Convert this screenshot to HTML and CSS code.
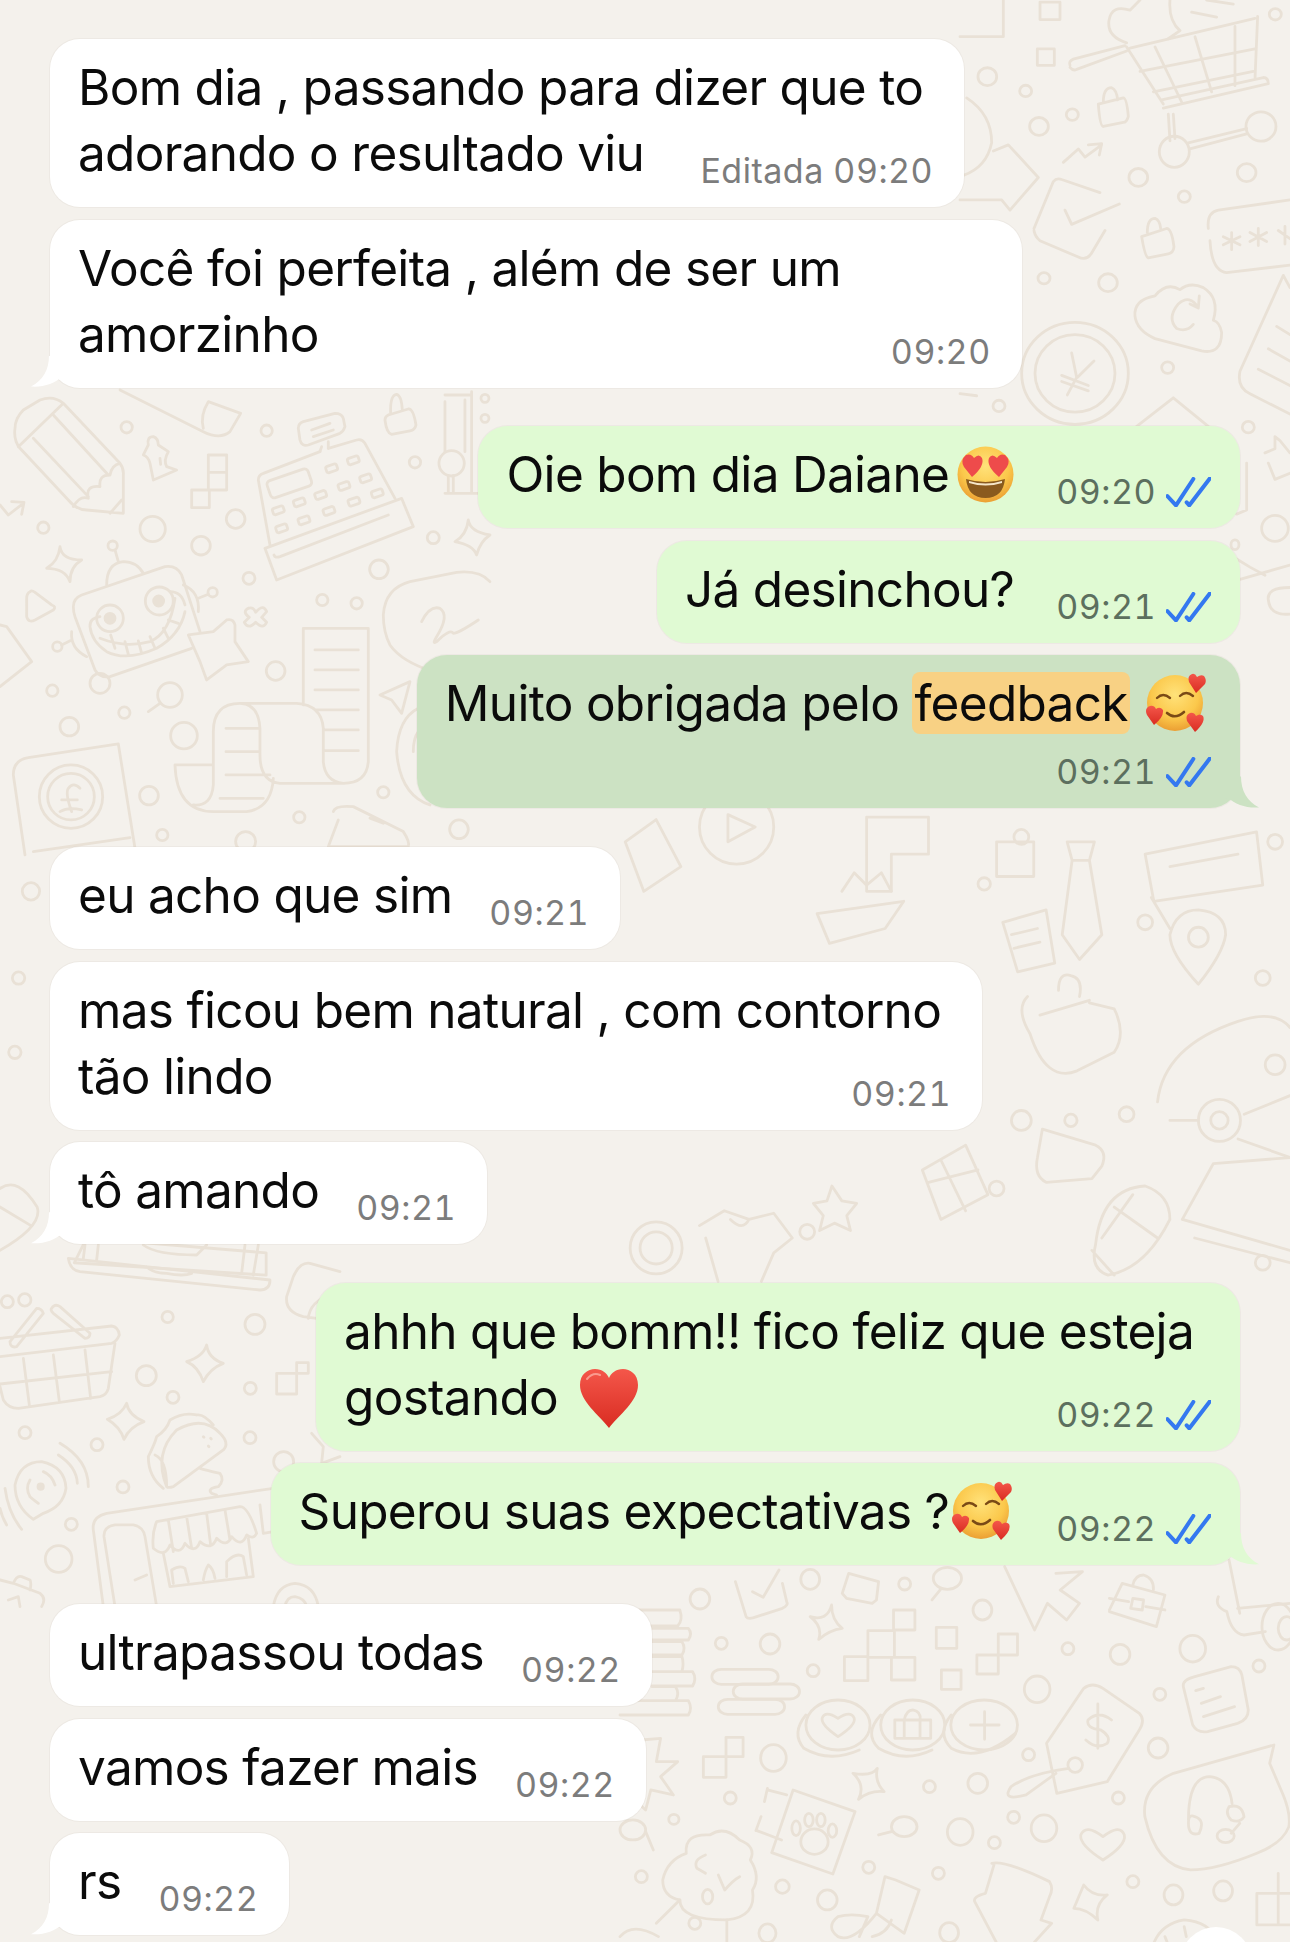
FILE: index.html
```html
<!DOCTYPE html>
<html lang="pt-BR">
<head>
    <meta charset="UTF-8">
    <meta name="viewport" content="width=device-width, initial-scale=1.0">
    <title>Conversa</title>
    <link rel="stylesheet" href="styles.css">
</head>
<body>
    <svg class="sprites" width="0" height="0">
        <defs>
            <radialGradient id="skin" cx="50%" cy="35%" r="70%">
                <stop offset="0" stop-color="#FFE27A"/>
                <stop offset=".6" stop-color="#FBC84B"/>
                <stop offset="1" stop-color="#E8962E"/>
            </radialGradient>
            <linearGradient id="red" x1="0" y1="0" x2="0" y2="1">
                <stop offset="0" stop-color="#F4574A"/>
                <stop offset="1" stop-color="#D92C22"/>
            </linearGradient>
            <symbol id="ticks" viewBox="0 0 135 90">
                <path d="M4 57 L30 85 L82 6 M62 76 L70 85 L132 4" fill="none" stroke="#3478F0" stroke-width="12" stroke-linecap="round" stroke-linejoin="round"/>
            </symbol>
            <symbol id="heart-eyes" viewBox="0 0 57 57">
                <circle cx="28.5" cy="28.5" r="28" fill="url(#skin)"/>
                <path d="M9 33 Q28.5 39 48 33 Q46 52 28.5 52 Q11 52 9 33Z" fill="#8A5A1E"/>
                <path d="M12 35 Q28.5 40 45 35 L45 37 Q28.5 42 12 37Z" fill="#F5E6C8"/>
                <path d="M15 31 L7 21 Q3 14 9 9 Q14 7 17 12 Q22 7 25 12 Q28 20 15 31Z" fill="#EE4B4B"/>
                <path d="M42 31 L50 21 Q54 14 48 9 Q43 7 40 12 Q35 7 32 12 Q29 20 42 31Z" fill="#EE4B4B"/>
            </symbol>
            <symbol id="hearts-face" viewBox="0 0 63 59">
                <circle cx="30" cy="30" r="28" fill="url(#skin)"/>
                <path d="M12 25 Q18 19 25 25 M35 23 Q41 17 48 23" fill="none" stroke="#7A4A16" stroke-width="2.4" stroke-linecap="round"/>
                <path d="M22 40 Q30 47 39 39" fill="none" stroke="#7A4A16" stroke-width="2.6" stroke-linecap="round"/>
                <path d="M51 20 L44 9 Q42 3 47 1 Q50 0 52 4 Q56 1 59 3 Q62 7 60 11Z" fill="url(#red)"/>
                <path d="M9 52 L2 42 Q-1 35 5 33 Q9 32 11 36 Q15 33 18 37 Q19 44 9 52Z" fill="url(#red)"/>
                <path d="M50 59 L42 48 Q40 42 45 40 Q49 39 51 43 Q55 40 58 43 Q61 49 50 59Z" fill="url(#red)"/>
            </symbol>
            <symbol id="red-heart" viewBox="0 0 60 59">
                <path d="M30 59 C20 46 1 32 1 16 C1 5 9 0 16 0 C23 0 28 4 30 9 C32 4 37 0 44 0 C51 0 59 5 59 16 C59 32 40 46 30 59Z" fill="url(#red)"/>
                <path d="M8 10 Q14 3 21 6" fill="none" stroke="#FA9A8E" stroke-width="2" stroke-linecap="round"/>
            </symbol>
        </defs>
    </svg>

    <!-- papel de parede, traçado na escala das capturas -->
    <svg class="doodles" width="1290" height="1942" viewBox="0 0 1290 1942">
        <g transform="translate(960 0) scale(.3333 .408)">
            <path d="M330 160 Q325 150 340 145 L495 112 M330 165 Q340 175 350 170 L500 125 M510 118 L885 45 M893 40 L885 195 M610 265 L925 205 Q925 190 910 190 L605 245 M500 115 L610 255 M540 175 L885 120 M580 225 L880 175 M585 115 L665 250 M705 90 L755 225 M825 65 L825 210 M625 280 L630 345 M640 280 L645 340 M685 350 L860 315 M690 365 L860 328"/>
            <path d="M500 105 Q440 90 447 50 Q455 10 510 25 L540 0 M630 0 Q625 50 660 75 L625 95 M695 30 L770 42 M740 0 L820 10"/>
            <path d="M232 120 H283 V160 H232Z M240 5 H300 V48 H240Z M0 90 H130 V0"/>
            <path d="M415 255 L490 240 Q500 240 505 285 Q500 300 490 300 L430 310 Q420 310 415 255 M430 250 Q430 215 455 215 Q470 220 473 245"/>
            <path d="M545 580 L620 560 Q635 560 642 605 Q640 620 625 622 L565 632 Q555 630 545 580 M562 570 Q562 535 585 535 Q600 540 602 560"/>
            <path d="M310 398 L355 365 L375 385 L425 355 M385 355 L425 352 L418 380"/>
            <path d="M100 370 L145 355 L235 435 L150 515 L125 490 L0 490 M20 240 Q95 280 95 350 Q80 410 10 430"/>
            <path d="M222 560 L280 445 Q290 435 305 440 L420 472 M222 565 Q225 580 240 590 L355 630 Q380 640 395 620 L435 565 M315 515 L335 550 L478 500"/>
            <path d="M745 560 Q740 520 775 515 L990 490 M750 590 Q755 665 800 668 L990 650 M815 570 V612 M790 580 L840 600 M790 600 L840 580 M895 560 V602 M870 570 L920 592 M870 592 L920 570 M975 555 V598 M955 565 L990 585"/>
            <path d="M585 830 L725 860 Q785 870 785 815 Q780 790 760 785 Q780 730 730 705 Q690 690 660 710 Q620 690 585 725 Q520 735 525 775 Q530 810 585 830 M715 755 Q690 720 655 745 Q620 780 650 805 Q680 815 700 795 M690 745 L715 755 L718 725"/>
            <ellipse cx="345" cy="915" rx="160" ry="125"/>
            <ellipse cx="345" cy="915" rx="120" ry="95"/>
            <path d="M335 865 L350 925 L322 968 M305 920 L385 945 M305 935 L385 958 M402 885 L352 925"/>
            <path d="M970 675 L840 910 Q830 950 870 965 L990 1015 M970 675 L990 705 M950 800 L990 820 M925 855 L990 885 M895 905 L990 945"/>
            <path d="M915 1110 L945 1100 L945 1070 L960 1080 L990 1110 M925 1135 L945 1175 L990 1160 M860 1135 V1250 L830 1260"/>
            <path d="M0 965 L50 970 M530 1045 L640 975 L745 1045"/>
            <path d="M840 1420 L990 1385 M830 1370 L870 1390 L915 1410 M990 1440 Q920 1440 925 1470 Q930 1510 990 1505"/>
            <circle cx="825" cy="1335" r="12"/>
            <ellipse cx="82" cy="188" rx="28" ry="22"/><ellipse cx="197" cy="223" rx="18" ry="14"/>
            <ellipse cx="237" cy="310" rx="28" ry="22"/><ellipse cx="337" cy="281" rx="18" ry="14"/>
            <ellipse cx="535" cy="435" rx="28" ry="22"/><ellipse cx="673" cy="482" rx="18" ry="14"/>
            <ellipse cx="860" cy="423" rx="28" ry="22"/><ellipse cx="946" cy="35" rx="18" ry="14"/>
            <ellipse cx="252" cy="682" rx="18" ry="14"/><ellipse cx="444" cy="693" rx="28" ry="22"/>
            <ellipse cx="623" cy="901" rx="18" ry="14"/><ellipse cx="117" cy="995" rx="18" ry="14"/>
            <ellipse cx="865" cy="1047" rx="18" ry="14"/><ellipse cx="945" cy="1295" rx="40" ry="32"/>
            <ellipse cx="643" cy="372" rx="45" ry="38"/><ellipse cx="903" cy="310" rx="45" ry="36"/>
        </g>

        <g transform="translate(0 385) scale(.3333)">
            <path d="M45 130 Q45 100 70 75 L120 45 Q160 30 190 55 L360 235 Q372 250 370 270 L370 385 L260 375 Q230 375 205 345 L60 190 Q40 165 45 130 M55 185 L190 55 M100 160 L265 335 M160 90 L325 270 M220 365 Q240 330 265 340 Q255 300 300 305 Q295 270 330 270 Q335 240 360 235 M330 385 L365 345"/>
            <path d="M360 15 L610 140 Q660 165 690 140 L722 85 L625 50 Q600 90 610 130"/>
            <path d="M445 180 Q440 155 460 155 Q475 160 475 180 L505 200 Q490 225 500 245 L530 255 L460 285 L450 235 Q445 215 430 210Z M480 220 L482 238"/>
            <path d="M625 210 H680 V315 H625Z M625 262 H680 M575 315 H628 V368 H575Z"/>
            <path d="M795 490 L1205 340 L1240 425 L830 585Z M810 480 L775 285 Q775 270 790 265 L960 200 M985 190 L1070 165 Q1085 160 1095 175 L1185 340 M822 510 Q825 520 840 515 L1165 390"/>
            <path d="M895 130 Q895 115 910 110 L1005 85 Q1025 85 1030 100 L1035 125 Q1030 140 1020 145 L925 180 Q905 185 900 165Z M935 135 L990 115 M940 155 L1000 135 M965 185 L960 200 M985 170 L985 190"/>
            <rect x="-65" y="-27" width="130" height="54" rx="12" transform="translate(868 295) rotate(-19)"/>
            <rect x="-17" y="-10" width="34" height="20" rx="6" transform="translate(995 250) rotate(-19)"/>
            <rect x="-17" y="-10" width="34" height="20" rx="6" transform="translate(1060 226) rotate(-19)"/>
            <rect x="-17" y="-10" width="34" height="20" rx="6" transform="translate(1097 280) rotate(-19)"/>
            <rect x="-17" y="-10" width="34" height="20" rx="6" transform="translate(1032 303) rotate(-19)"/>
            <rect x="-17" y="-10" width="34" height="20" rx="6" transform="translate(962 330) rotate(-19)"/>
            <rect x="-17" y="-10" width="34" height="20" rx="6" transform="translate(898 352) rotate(-19)"/>
            <rect x="-17" y="-10" width="34" height="20" rx="6" transform="translate(835 376) rotate(-19)"/>
            <rect x="-17" y="-10" width="34" height="20" rx="6" transform="translate(1132 325) rotate(-19)"/>
            <rect x="-17" y="-10" width="34" height="20" rx="6" transform="translate(1062 350) rotate(-19)"/>
            <rect x="-17" y="-10" width="34" height="20" rx="6" transform="translate(987 378) rotate(-19)"/>
            <rect x="-17" y="-10" width="34" height="20" rx="6" transform="translate(912 406) rotate(-19)"/>
            <rect x="-17" y="-10" width="34" height="20" rx="6" transform="translate(845 430) rotate(-19)"/>
            <path d="M1165 90 L1225 72 Q1240 70 1248 120 Q1245 135 1230 138 L1175 148 Q1160 145 1155 105 Q1155 95 1165 90 M1172 85 Q1170 30 1190 28 Q1205 32 1207 75"/>
            <path d="M1335 30 H1415 M1335 50 V200 M1395 45 V200 M1345 272 V325 M1360 272 V325 M1335 325 H1440 M1415 20 V325"/>
            <circle cx="1355" cy="235" r="38"/><circle cx="1455" cy="40" r="12"/><circle cx="1455" cy="100" r="12"/>
            <path d="M220 665 Q220 640 245 630 L495 545 Q530 540 545 570 L600 740 M575 790 L330 875 Q300 880 285 855 L225 695 Q220 680 220 665"/>
            <circle cx="330" cy="700" r="40"/><circle cx="478" cy="648" r="42"/>
            <path d="M270 725 Q275 770 320 800 Q380 830 470 790 Q540 750 555 680 M300 760 Q375 790 450 770 Q510 745 525 640 M345 790 L332 750 M385 808 L375 770 M425 805 L415 768 M465 790 L450 755 M505 760 L490 730 M535 715 L505 705 M270 725 Q268 700 300 695 M510 620 Q545 620 555 660"/>
            <path d="M320 600 Q320 535 370 530 Q410 530 430 565 M355 530 L345 495 M215 740 Q210 790 260 815 M215 765 L185 780 M550 600 Q600 620 595 680 M595 640 L625 628"/>
            <circle cx="338" cy="482" r="14"/><circle cx="172" cy="785" r="14"/><circle cx="638" cy="622" r="14"/><circle cx="300" cy="895" r="30"/>
            <circle class="dot" cx="330" cy="700" r="15"/><circle class="dot" cx="476" cy="648" r="15"/>
            <path d="M565 750 L640 740 L680 705 Q700 700 705 720 L705 770 L745 830 L680 840 L620 885 L600 830Z"/>
            <path d="M745 670 Q760 665 767 682 Q790 655 800 680 L785 697 L800 712 Q790 735 767 712 Q745 735 733 712 L748 697 Q725 680 745 670"/>
            <path d="M910 960 V730 H1105 V1130 Q1100 1195 1030 1195 H840 Q780 1190 780 1110 V1030 Q775 955 720 955 H890 Q965 960 970 1030 V1130 Q975 1190 1030 1195 M640 1140 V1040 Q640 955 720 955 M525 1140 H640 V1200 Q635 1265 580 1260 M525 1140 Q530 1280 640 1280 H740 Q815 1270 820 1180 M945 795 H1075 M945 855 H1075 M945 915 H1075 M950 975 H1075 M975 1035 H1075 M975 1097 H1075 M678 1030 H780 M678 1100 H780 M678 1170 H810 M660 1240 H790"/>
            <path d="M75 1410 L40 1170 Q40 1125 85 1118 L355 1077 L405 1390 M100 1400 L390 1358"/>
            <circle cx="213" cy="1235" r="95"/><circle cx="213" cy="1235" r="70"/>
            <path d="M240 1210 Q220 1190 205 1210 Q195 1225 215 1280 M185 1245 H232 M180 1280 Q205 1265 245 1275"/>
            <path d="M1300 860 Q1205 830 1170 780 Q1150 740 1150 690 Q1155 610 1230 590 L1370 562 Q1440 555 1470 590 M1265 710 Q1290 660 1320 670 Q1350 690 1310 755 Q1295 780 1310 770 Q1350 730 1360 745 Q1375 745 1435 705"/>
            <path d="M1140 930 L1230 890 L1205 985 L1175 945Z"/>
            <path d="M1000 1280 Q1005 1260 1060 1265 L1210 1340 Q1230 1370 1225 1385 H985 L1015 1305 M1110 1300 L1150 1315"/>
            <path d="M1190 1100 Q1195 1000 1255 970 M1240 1100 Q1240 1060 1255 1040 M1190 1100 Q1200 1230 1290 1260"/>
            <circle cx="510" cy="930" r="37"/>
            <path d="M480 955 L445 980"/>
            <path d="M180 485 Q185 525 245 525 Q210 545 210 590 Q195 550 140 550 Q175 530 180 485Z M1405 405 Q1410 440 1470 450 Q1440 470 1430 510 Q1420 480 1365 470 Q1400 450 1405 405Z"/>
            <path d="M90 620 Q80 625 80 640 L80 695 Q85 715 105 705 L160 675 Q170 665 155 660 L105 622 Q95 615 90 620Z"/>
            <path d="M0 360 L25 390 L70 355 M35 350 L72 352 L65 388 M0 720 L20 725 L95 830 L0 905"/>
            <circle cx="380" cy="127" r="17"/><circle cx="800" cy="137" r="17"/><circle cx="130" cy="428" r="17"/>
            <circle cx="458" cy="432" r="38"/><circle cx="707" cy="402" r="28"/><circle cx="603" cy="482" r="28"/>
            <circle cx="747" cy="580" r="18"/><circle cx="1137" cy="553" r="28"/><circle cx="1245" cy="232" r="17"/>
            <circle cx="1300" cy="458" r="18"/><circle cx="967" cy="645" r="17"/><circle cx="1070" cy="655" r="17"/>
            <circle cx="827" cy="858" r="28"/><circle cx="157" cy="917" r="17"/><circle cx="373" cy="983" r="17"/>
            <circle cx="208" cy="1025" r="28"/><circle cx="552" cy="1052" r="40"/><circle cx="1150" cy="1222" r="17"/>
            <circle cx="447" cy="1232" r="28"/><circle cx="898" cy="1297" r="17"/><circle cx="487" cy="1350" r="17"/>
            <circle cx="1377" cy="1333" r="28"/><circle cx="737" cy="1370" r="30"/>
        </g>

        <g transform="translate(0 1240) scale(.3333)">
            <path d="M205 55 L810 120 Q810 150 780 150 L240 95 Q210 90 205 55 M440 80 Q460 100 500 100 Q550 110 575 100 M255 15 L250 55 M295 15 L290 60 M775 15 L760 105 M735 15 L725 100 M430 15 Q470 45 590 45 L620 15"/>
            <path d="M0 295 L335 258 Q355 260 358 285 Q350 305 335 310 L0 350 M345 310 L325 445 Q320 465 300 470 L55 505 Q25 505 10 480 L0 440 M70 355 L88 495 M160 345 L178 485 M255 330 L272 475 M0 432 L335 395 M30 305 L110 205 Q125 205 130 220 L50 320 Q30 325 30 305 M155 205 Q165 190 180 200 L270 280 Q270 295 255 295 L160 220 Q150 210 155 205"/>
            <path d="M620 315 Q625 355 670 370 Q630 385 610 425 Q595 380 560 365 Q610 350 620 315Z M380 490 Q385 525 432 545 Q390 560 372 598 Q360 560 322 538 Q365 525 380 490Z"/>
            <path d="M100 838 Q45 800 45 735 Q60 665 125 665 Q195 680 198 745 Q190 800 130 820 L100 838Z M165 735 Q155 705 130 695 M90 770 Q75 745 90 720 M115 790 Q95 775 90 770 M180 610 Q265 660 265 740 M175 645 Q230 680 232 730 M15 745 Q25 820 65 868 M0 805 Q5 830 20 855"/>
            <circle class="dot" cx="122" cy="740" r="8"/>
            <path d="M500 740 Q460 640 530 570 Q610 525 660 580 Q690 610 670 630 L520 740 Q505 745 500 740Z M490 745 Q445 710 445 650 Q465 610 470 590 Q500 570 510 540 Q550 515 590 525 Q610 520 640 555 M465 645 Q500 660 500 740 M610 590 L612 592 M632 595 L634 597 M625 618 L627 620 M600 685 Q615 690 660 700 Q675 720 655 740 Q620 745 635 760 L650 765"/>
            <path d="M310 1100 L280 870 Q275 830 320 820 L820 745 M345 1100 L312 890 Q310 860 345 855 L400 855 Q430 860 435 890 L470 1100 M405 1020 L440 1005 M470 845 L720 800 Q745 800 770 880 Q760 900 740 885 Q725 925 695 890 Q680 925 650 895 Q635 935 600 905 Q585 945 555 910 Q540 950 510 915 Q495 955 460 925 Q455 880 470 845 M505 840 L520 935 M560 830 L575 925 M620 820 L632 915 M675 810 L690 900 M490 940 L510 1040 L760 1010 L745 895 M520 1030 L515 990 Q540 975 555 985 L565 1025 M610 1020 Q615 990 625 975 Q640 985 645 1015 M680 1010 L680 965 Q710 935 730 950 L740 1005 M780 795 L790 880 L820 875 M820 745 H840"/>
            <path d="M1020 95 L930 70 Q900 65 880 110 L860 170 Q855 215 910 230 L950 235 M925 235 Q930 185 990 165"/>
            <path d="M830 400 H890 V462 H830Z M890 368 H925 V400 H890Z M935 580 L970 620 L965 670 M1020 650 L965 670"/>
            <path d="M0 1020 L40 1030 L120 1060 Q140 1075 125 1100 M40 1030 Q50 1005 65 1010 L90 1020 Q95 1030 90 1050 M25 1080 L55 1070 L60 1100"/>
            <circle cx="22" cy="185" r="18"/><circle cx="503" cy="231" r="17"/><circle cx="765" cy="253" r="30"/>
            <circle cx="439" cy="407" r="30"/><circle cx="751" cy="445" r="18"/><circle cx="519" cy="472" r="18"/>
            <circle cx="75" cy="578" r="18"/><circle cx="291" cy="614" r="18"/><circle cx="750" cy="593" r="18"/>
            <circle cx="851" cy="665" r="30"/><circle cx="369" cy="741" r="18"/><circle cx="214" cy="853" r="18"/>
            <circle cx="176" cy="957" r="40"/>
            <path d="M820 1100 Q830 1035 885 1030 Q945 1035 955 1100 M855 1100 Q860 1070 885 1070 Q915 1075 920 1100"/>
        </g>

        <g transform="translate(620 1560) scale(.4274 .3333)">
            <path d="M45 150 H140 Q148 180 135 198 H45 M45 205 H160 Q170 220 160 240 H75 M75 245 H145 Q155 265 145 285 H75 M75 290 H145 Q150 310 145 335 H75 M75 335 H170 Q180 355 170 378 H75 M75 380 H130 Q140 400 130 422 H75 M0 422 H160 Q170 445 160 465 H0"/>
            <rect x="215" y="328" width="155" height="45" rx="22"/><rect x="265" y="372" width="155" height="45" rx="22"/><rect x="230" y="418" width="155" height="45" rx="22"/>
            <path d="M270 65 L295 170 Q300 180 320 170 L380 145 Q395 135 390 125 L380 70 M310 95 L335 112 L372 30"/>
            <path d="M520 100 L535 40 L605 65 L600 120 L590 130 L530 115Z"/>
            <circle cx="766" cy="55" r="33"/>
            <path d="M752 85 L730 120"/>
            <path d="M1020 40 L1082 35 L1030 90 L1075 130 L1045 180 L1000 130 L970 210 L900 20"/>
            <path d="M1145 150 L1175 70 L1275 105 L1255 200 L1145 155 M1145 115 L1190 125 M1230 140 L1275 150 M1200 115 L1225 120 L1222 150 L1195 145Z M1200 75 Q1205 45 1225 45 Q1250 55 1248 90"/>
            <path d="M1425 0 L1450 160 M1400 110 Q1390 140 1420 155 Q1430 220 1460 225 L1510 215 M1445 145 L1568 130"/>
            <ellipse cx="1540" cy="200" rx="38" ry="70"/><ellipse cx="1560" cy="205" rx="20" ry="35"/>
            <path d="M495 135 Q485 185 445 170 Q475 200 465 238 Q490 210 520 205 Q495 180 495 135Z M602 625 Q590 650 545 640 Q575 675 558 718 Q585 690 618 695 Q595 665 602 625Z M1085 975 Q1075 1005 1062 1045 Q1090 1045 1118 1080 Q1110 1035 1140 1005 Q1105 1010 1085 975Z"/>
            <path d="M640 150 H690 V210 H640Z M580 212 H642 V292 H580Z M525 290 H580 V362 H525Z M635 292 H690 V360 H635Z M740 202 H788 V265 H740Z M752 330 H798 V388 H752Z M835 285 H885 V342 H835Z M885 222 H930 V285 H885Z M195 590 H248 V652 H195Z M248 532 H288 V590 H248Z"/>
            <ellipse cx="510" cy="495" rx="75" ry="75"/><ellipse cx="685" cy="495" rx="75" ry="75"/><ellipse cx="852" cy="495" rx="78" ry="75"/>
            <path d="M435 465 Q400 520 430 565 Q490 610 560 570 M610 465 Q570 520 605 565 Q665 610 730 570 M775 465 Q740 520 775 565 Q840 610 925 520"/>
            <path d="M510 530 Q470 495 473 475 Q480 450 510 475 Q540 450 548 475 Q552 495 510 530Z M643 480 H727 V535 H643Z M665 480 V535 M702 480 V535 M665 480 Q670 450 685 450 Q705 455 702 480 M853 455 V538 M820 495 H887"/>
            <path d="M998 550 L1085 385 Q1105 365 1130 385 L1215 460 Q1230 480 1215 510 L1140 665 L1022 700Z M1118 432 V565 M1150 480 Q1120 450 1095 480 Q1090 505 1125 510 Q1150 530 1140 550 Q1115 570 1090 540"/>
            <ellipse cx="1065" cy="615" rx="17" ry="22"/>
            <path d="M1050 625 Q960 640 915 680 Q890 725 950 705 L1020 640"/>
            <path d="M1318 380 Q1315 360 1345 350 L1430 320 Q1450 320 1455 345 L1470 450 Q1470 480 1445 490 L1375 515 Q1350 520 1340 495Z M1347 392 L1365 385 M1360 430 L1405 410 M1365 470 L1438 440"/>
            <path d="M1530 555 L1295 640 Q1220 680 1228 770 Q1255 920 1335 930 Q1395 930 1490 880 Q1550 850 1565 800 Q1570 760 1550 700 L1520 610 Z M1330 780 Q1330 650 1380 650 Q1425 655 1432 730 M1330 790 Q1330 760 1345 770 Q1370 780 1355 820 Q1330 830 1330 790 M1425 740 Q1455 730 1460 770 Q1450 790 1430 780 Q1415 760 1425 740 M1450 790 L1430 820"/>
            <ellipse cx="1417" cy="828" rx="20" ry="20"/>
            <path d="M1130 900 Q1075 855 1078 825 Q1090 790 1130 830 Q1170 790 1180 825 Q1185 855 1130 900Z"/>
            <path d="M405 690 L550 755 L498 942 L355 878Z M390 705 L345 690 M320 812 L378 840 M345 685 L338 725 M330 770 L318 812"/>
            <ellipse cx="455" cy="845" rx="32" ry="38"/>
            <ellipse cx="412" cy="805" rx="10" ry="22"/><ellipse cx="442" cy="780" rx="10" ry="20"/><ellipse cx="470" cy="780" rx="10" ry="20"/><ellipse cx="497" cy="812" rx="10" ry="20"/>
            <path d="M100 960 Q110 900 155 880 Q150 820 210 825 Q245 795 280 840 Q320 860 305 900 Q330 950 310 990 Q320 1070 250 1080 Q140 1080 140 1020 Q100 1010 100 960 M200 885 Q170 900 180 925 L200 940 M230 945 L245 990 Q265 960 280 950"/>
            <path d="M140 1020 L85 1090 M0 1130 Q30 1085 90 1130 M250 1080 V1146"/>
            <ellipse cx="205" cy="1010" rx="12" ry="22"/>
            <path d="M60 815 L78 870"/>
            <ellipse cx="30" cy="810" rx="30" ry="30"/>
            <path d="M50 540 L95 535 L85 605 L135 605 L95 650 L125 705 L72 690 L60 750 L0 680"/>
            <circle cx="665" cy="800" r="30"/>
            <path d="M635 815 L605 825"/>
            <path d="M620 950 L645 960 L700 990 L665 1120 L600 1060Z M600 1060 Q545 1150 510 1130 Q480 1100 510 1070 Q540 1060 580 1070 L560 1130 M635 1080 Q625 1120 590 1130"/>
            <path d="M870 910 Q900 900 1005 965 Q1015 985 1005 1010 L985 1080 L1010 1090 L970 1146 M875 915 L855 1000 Q825 1010 830 1025 L880 1146"/>
            <path d="M1490 1000 H1568 M1490 1000 V1095 H1568 M1540 940 V1095"/>
            <path d="M1250 1146 Q1270 1090 1320 1080 Q1380 1085 1400 1146 M1275 1130 L1280 1146 M1320 1100 L1325 1130"/>
            <ellipse cx="445" cy="58" rx="22" ry="30"/><ellipse cx="666" cy="72" rx="14" ry="18"/><ellipse cx="187" cy="117" rx="23" ry="30"/>
            <ellipse cx="848" cy="150" rx="22" ry="30"/><ellipse cx="237" cy="250" rx="14" ry="18"/><ellipse cx="351" cy="252" rx="23" ry="30"/>
            <ellipse cx="452" cy="332" rx="14" ry="18"/><ellipse cx="1048" cy="266" rx="14" ry="18"/><ellipse cx="1170" cy="283" rx="23" ry="30"/>
            <ellipse cx="1340" cy="266" rx="30" ry="40"/><ellipse cx="1495" cy="318" rx="14" ry="18"/><ellipse cx="976" cy="388" rx="30" ry="40"/>
            <ellipse cx="1263" cy="403" rx="14" ry="18"/><ellipse cx="1259" cy="564" rx="23" ry="30"/><ellipse cx="956" cy="584" rx="14" ry="18"/>
            <ellipse cx="359" cy="594" rx="30" ry="40"/><ellipse cx="837" cy="670" rx="23" ry="30"/><ellipse cx="724" cy="680" rx="14" ry="18"/>
            <ellipse cx="258" cy="714" rx="14" ry="18"/><ellipse cx="1166" cy="714" rx="14" ry="18"/><ellipse cx="921" cy="772" rx="14" ry="18"/>
            <ellipse cx="126" cy="778" rx="12" ry="15"/><ellipse cx="796" cy="816" rx="30" ry="40"/><ellipse cx="992" cy="805" rx="30" ry="40"/>
            <ellipse cx="876" cy="848" rx="14" ry="18"/><ellipse cx="582" cy="922" rx="14" ry="18"/><ellipse cx="745" cy="940" rx="14" ry="18"/>
            <ellipse cx="50" cy="950" rx="14" ry="18"/><ellipse cx="380" cy="980" rx="16" ry="20"/><ellipse cx="1200" cy="965" rx="14" ry="18"/>
            <ellipse cx="1295" cy="1005" rx="22" ry="30"/><ellipse cx="1411" cy="993" rx="22" ry="30"/><ellipse cx="485" cy="1020" rx="23" ry="30"/>
            <ellipse cx="175" cy="1090" rx="14" ry="18"/><ellipse cx="770" cy="1118" rx="22" ry="30"/><ellipse cx="345" cy="1120" rx="20" ry="28"/>
        </g>

        <!-- trechos menores, na escala da imagem reduzida -->
        <g transform="scale(1.238)">
            <path d="M925 690 L1015 672 L1020 715 L932 728Z M945 700 L1000 690 M930 725 L945 750"/>
            <path d="M862 680 L884 680 L880 695 L890 755 L872 775 L858 755 L866 695Z M866 695 L880 695"/>
            <path d="M810 745 L845 735 L852 778 L822 785Z M817 755 L838 750 M819 766 L840 761"/>
            <path d="M968 795 Q945 770 945 755 Q950 735 968 735 Q990 737 990 755 Q988 770 968 795Z"/>
            <circle cx="968" cy="757" r="8"/>
            <path d="M830 805 Q820 815 832 835 Q845 875 870 865 L900 850 Q910 835 900 815 L880 810 M855 800 Q855 785 865 788 Q875 790 872 805 M840 820 L880 808"/>
            <circle cx="985" cy="905" r="17"/><circle cx="985" cy="905" r="7"/>
            <path d="M935 890 Q940 845 1000 825 Q1030 815 1042 830 M968 905 H945 M1005 900 L1042 885 M1042 935 L1000 920"/>
            <path d="M842 912 L885 925 Q895 930 890 942 L882 952 L845 955 Q835 950 838 935Z"/>
            <path d="M745 945 L780 925 L798 965 L760 985Z M760 937 L780 978 M750 955 L790 945"/>
            <path d="M672 958 L680 970 L692 972 L684 982 L687 994 L674 988 L662 994 L665 982 L657 972 L668 970Z"/>
            <path d="M885 1005 Q890 960 925 958 Q945 965 945 985 Q925 1025 895 1030 Q880 1025 885 1005Z M900 975 L935 1000 M915 965 L890 1000 M900 1030 L882 1010"/>
            <path d="M955 985 L980 940 L1042 935 M955 985 L1042 1010 M965 1000 L1042 1020"/>
            <circle cx="530" cy="1008" r="13"/><circle cx="530" cy="1008" r="21"/>
            <path d="M565 990 L585 978 L605 985 L625 980 L640 1000 L625 1012 L615 1035 M570 1000 L580 1035 M590 985 Q600 995 605 985"/>
            <path d="M70 1000 L215 1012 L215 1030 L60 1020Z"/>
            <path d="M595 668 m-30 0 a30 30 0 1 0 60 0 a30 30 0 1 0 -60 0 M588 658 L610 668 L588 680Z"/>
            <path d="M660 738 L730 728 L715 750 L670 762Z M680 720 L690 705 L700 715 L712 705 L720 720"/>
            <path d="M700 660 L750 660 V690 H720 V720 H700Z"/>
            <path d="M805 680 V708 H835 V680Z"/>
            <path d="M505 680 L530 662 L550 700 L520 720Z"/>
            <circle cx="805" cy="960" r="6"/><circle cx="652" cy="995" r="6"/><circle cx="865" cy="905" r="5"/><circle cx="1020" cy="1020" r="6"/>
            <circle cx="825" cy="676" r="6"/><circle cx="795" cy="714" r="5"/><circle cx="925" cy="745" r="6"/>
            <circle cx="825" cy="905" r="8"/><circle cx="910" cy="900" r="6"/><circle cx="12" cy="850" r="5"/>
            <circle cx="1030" cy="680" r="6"/><circle cx="1020" cy="790" r="6"/><circle cx="1030" cy="860" r="8"/>
            <circle cx="20" cy="1050" r="5"/><circle cx="25" cy="720" r="7"/><circle cx="15" cy="790" r="5"/>
            <path d="M0 960 Q15 950 30 975 Q35 990 0 1010 M0 975 L25 990"/>
        </g>
    </svg>

    <div class="chat">
        <div class="bubble theirs stacked">
            <div class="text">Bom dia , passando para dizer que to<br>adorando o resultado viu</div>
            <div class="meta"><span class="time">Editada 09:20</span></div>
        </div>
        <div class="bubble theirs tail wide-gap">
            <div class="text">Você foi perfeita , além de ser um<br>amorzinho</div>
            <div class="meta"><span class="time">09:20</span></div>
        </div>

        <div class="bubble mine first">
            <div class="text">Oie bom dia Daiane<svg class="emoji eyes"><use href="#heart-eyes"/></svg></div>
            <div class="meta"><span class="time">09:20</span><svg class="ticks"><use href="#ticks"/></svg></div>
        </div>
        <div class="bubble mine">
            <div class="text">Já desinchou?</div>
            <div class="meta"><span class="time">09:21</span><svg class="ticks"><use href="#ticks"/></svg></div>
        </div>
        <div class="bubble mine stacked below selected tail">
            <div class="text">Muito obrigada pelo <mark>feedback</mark> <svg class="emoji hugs"><use href="#hearts-face"/></svg></div>
            <div class="meta"><span class="time">09:21</span><svg class="ticks"><use href="#ticks"/></svg></div>
        </div>

        <div class="bubble theirs first">
            <div class="text">eu acho que sim</div>
            <div class="meta"><span class="time">09:21</span></div>
        </div>
        <div class="bubble theirs stacked">
            <div class="text">mas ficou bem natural , com contorno<br>tão lindo</div>
            <div class="meta"><span class="time">09:21</span></div>
        </div>
        <div class="bubble theirs tail">
            <div class="text">tô amando</div>
            <div class="meta"><span class="time">09:21</span></div>
        </div>

        <div class="bubble mine first stacked">
            <div class="text">ahhh que bomm!! fico feliz que esteja<br>gostando <svg class="emoji love"><use href="#red-heart"/></svg></div>
            <div class="meta"><span class="time">09:22</span><svg class="ticks"><use href="#ticks"/></svg></div>
        </div>
        <div class="bubble mine tail">
            <div class="text">Superou suas expectativas ?<svg class="emoji hugs"><use href="#hearts-face"/></svg></div>
            <div class="meta"><span class="time">09:22</span><svg class="ticks"><use href="#ticks"/></svg></div>
        </div>

        <div class="bubble theirs first">
            <div class="text">ultrapassou todas</div>
            <div class="meta"><span class="time">09:22</span></div>
        </div>
        <div class="bubble theirs">
            <div class="text">vamos fazer mais</div>
            <div class="meta"><span class="time">09:22</span></div>
        </div>
        <div class="bubble theirs tail">
            <div class="text">rs</div>
            <div class="meta"><span class="time">09:22</span></div>
        </div>
    </div>

    <div class="scroll-btn"></div>
</body>
</html>
```

FILE: styles.css
```css
* {
    box-sizing: border-box;
}
html, body {
    margin: 0;
    height: 1942px;
    overflow: hidden;
}
body {
    position: relative;
    background-color: #F4F1EC;
    font-family: Inter, "Liberation Sans", sans-serif;
    color: #0B0B0B;
}
.sprites {
    position: absolute;
}
.doodles {
    position: absolute;
    top: 0;
    left: 0;
    fill: none;
    stroke: #E9E1D6;
    stroke-width: 2.8;
    stroke-linecap: round;
    stroke-linejoin: round;
}
.doodles * {
    vector-effect: non-scaling-stroke;
}
.doodles .dot {
    fill: #E9E1D6;
}
.chat {
    position: relative;
    display: flex;
    flex-direction: column;
    gap: 12.6px;
    padding: 39px 50px 0;
}
.bubble {
    position: relative;
    display: flex;
    align-items: flex-end;
    width: fit-content;
    gap: 37px;
    padding: 15px 31px 21px 28px;
    border-radius: 30px;
    box-shadow: 0 0 0 1px rgba(120, 100, 70, 0.05);
}
.bubble.first {
    margin-top: 26px;
}
.bubble.wide-gap {
    gap: 50px;
}
.theirs {
    background-color: #FFFFFF;
}
.mine {
    align-self: flex-end;
    gap: 42px;
    padding-right: 29px;
    background-color: #E0FAD3;
}
.mine.selected {
    background-color: #CCE2C3;
}
.stacked {
    display: block;
    padding-right: 41px;
}
.text {
    font-size: 49.5px;
    line-height: 66px;
    letter-spacing: -0.7px;
    white-space: nowrap;
}
.meta {
    display: flex;
    align-items: center;
    justify-content: flex-end;
    gap: 10px;
    height: 40px;
    margin-bottom: -5px;
    color: #7C7C7C;
    font-size: 34px;
    font-variant-numeric: tabular-nums;
    line-height: 40px;
    letter-spacing: 0.5px;
    white-space: nowrap;
}
.mine .meta {
    color: #5C6F5E;
}
.stacked .meta {
    margin-top: -35px;
    margin-right: -10px;
}
.mine.stacked {
    padding-right: 46px;
}
.mine.stacked .meta {
    margin-right: -17px;
}
.mine.stacked.below {
    padding-right: 32px;
}
.mine.stacked.below .meta {
    margin-top: 16px;
    margin-right: -3px;
}
.ticks {
    width: 45px;
    height: 30px;
}
.emoji {
    vertical-align: -11px;
}
.eyes {
    width: 57px;
    height: 57px;
    margin-left: 8px;
}
.hugs {
    width: 63px;
    height: 59px;
    margin-left: 2px;
}
.love {
    width: 60px;
    height: 59px;
    margin-left: 8px;
    vertical-align: -13px;
}
mark {
    padding: 1px 2px;
    border-radius: 8px;
    background-color: #F8D184;
    color: inherit;
}
/* rabinho do balão */
.tail::before {
    content: "";
    position: absolute;
    bottom: 0;
    left: -19px;
    width: 50px;
    height: 32px;
    background-color: inherit;
    clip-path: path("M18 0 C18 14 12 25 0 31 C12 32 24 28 31 21 L50 32 L50 0 Z");
}
.mine.tail::before {
    left: auto;
    right: -19px;
    transform: scaleX(-1);
}
.scroll-btn {
    position: absolute;
    top: 1927px;
    left: 1180px;
    width: 72px;
    height: 72px;
    border-radius: 50%;
    background-color: #FFFFFF;
}
```
